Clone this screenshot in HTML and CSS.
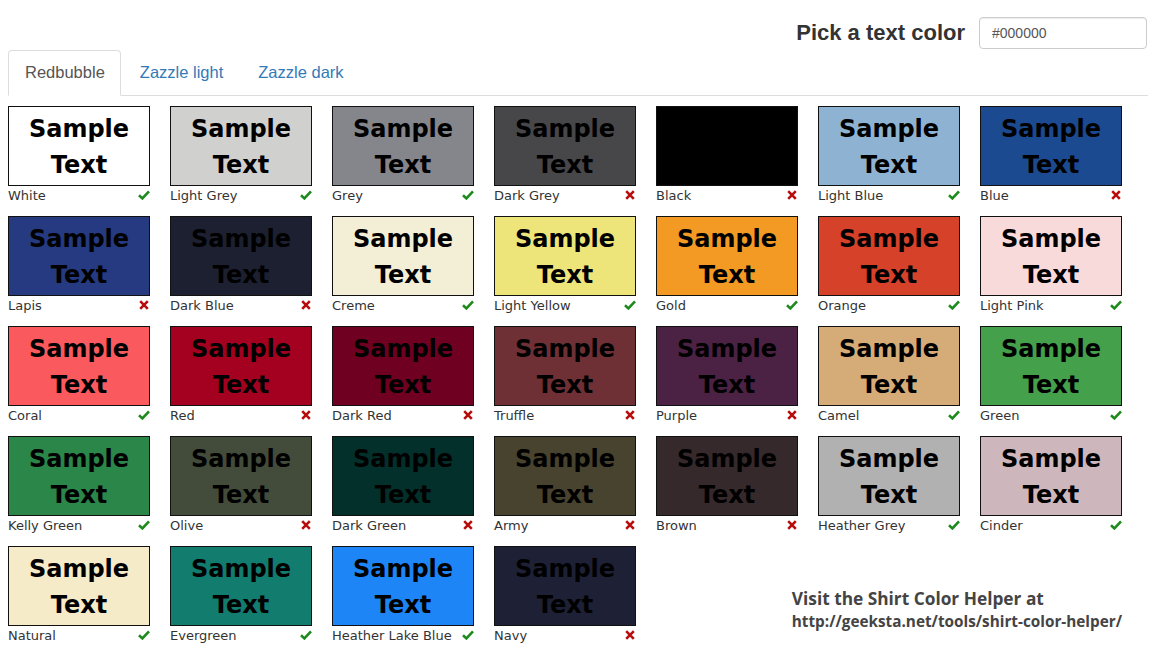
FILE: index.html
```html
<!DOCTYPE html>
<html>
<head>
<meta charset="utf-8">
<link rel="stylesheet" href="styles.css">
</head>
<body>
<svg class="defs" width="0" height="0" aria-hidden="true">
  <symbol id="ok" viewBox="0 0 12 10"><path d="M1 5.2 L4.4 8.4 L11 1.4" fill="none" stroke="currentColor" stroke-width="2.6" stroke-linejoin="miter"/></symbol>
  <symbol id="no" viewBox="0 0 10 10"><path d="M1.2 1.2 L8.8 8.8 M8.8 1.2 L1.2 8.8" fill="none" stroke="currentColor" stroke-width="2.6"/></symbol>
</svg>
<div class="page">
  <header class="top">
    <label class="pick">Pick a text color</label>
    <input class="color-input" type="text" value="#000000">
  </header>
  <nav class="tabs">
    <a class="tab active">Redbubble</a>
    <a class="tab">Zazzle light</a>
    <a class="tab">Zazzle dark</a>
  </nav>
  <main class="grid">
    <div class="item"><div class="box c-white">Sample<br>Text</div><div class="lbl"><span>White</span><svg class="ok"><use href="#ok"/></svg></div></div>
    <div class="item"><div class="box c-lightgrey">Sample<br>Text</div><div class="lbl"><span>Light Grey</span><svg class="ok"><use href="#ok"/></svg></div></div>
    <div class="item"><div class="box c-grey">Sample<br>Text</div><div class="lbl"><span>Grey</span><svg class="ok"><use href="#ok"/></svg></div></div>
    <div class="item"><div class="box c-darkgrey">Sample<br>Text</div><div class="lbl"><span>Dark Grey</span><svg class="no"><use href="#no"/></svg></div></div>
    <div class="item"><div class="box c-black">Sample<br>Text</div><div class="lbl"><span>Black</span><svg class="no"><use href="#no"/></svg></div></div>
    <div class="item"><div class="box c-lightblue">Sample<br>Text</div><div class="lbl"><span>Light Blue</span><svg class="ok"><use href="#ok"/></svg></div></div>
    <div class="item"><div class="box c-blue">Sample<br>Text</div><div class="lbl"><span>Blue</span><svg class="no"><use href="#no"/></svg></div></div>

    <div class="item"><div class="box c-lapis">Sample<br>Text</div><div class="lbl"><span>Lapis</span><svg class="no"><use href="#no"/></svg></div></div>
    <div class="item"><div class="box c-darkblue">Sample<br>Text</div><div class="lbl"><span>Dark Blue</span><svg class="no"><use href="#no"/></svg></div></div>
    <div class="item"><div class="box c-creme">Sample<br>Text</div><div class="lbl"><span>Creme</span><svg class="ok"><use href="#ok"/></svg></div></div>
    <div class="item"><div class="box c-lightyellow">Sample<br>Text</div><div class="lbl"><span>Light Yellow</span><svg class="ok"><use href="#ok"/></svg></div></div>
    <div class="item"><div class="box c-gold">Sample<br>Text</div><div class="lbl"><span>Gold</span><svg class="ok"><use href="#ok"/></svg></div></div>
    <div class="item"><div class="box c-orange">Sample<br>Text</div><div class="lbl"><span>Orange</span><svg class="ok"><use href="#ok"/></svg></div></div>
    <div class="item"><div class="box c-lightpink">Sample<br>Text</div><div class="lbl"><span>Light Pink</span><svg class="ok"><use href="#ok"/></svg></div></div>

    <div class="item"><div class="box c-coral">Sample<br>Text</div><div class="lbl"><span>Coral</span><svg class="ok"><use href="#ok"/></svg></div></div>
    <div class="item"><div class="box c-red">Sample<br>Text</div><div class="lbl"><span>Red</span><svg class="no"><use href="#no"/></svg></div></div>
    <div class="item"><div class="box c-darkred">Sample<br>Text</div><div class="lbl"><span>Dark Red</span><svg class="no"><use href="#no"/></svg></div></div>
    <div class="item"><div class="box c-truffle">Sample<br>Text</div><div class="lbl"><span>Truffle</span><svg class="no"><use href="#no"/></svg></div></div>
    <div class="item"><div class="box c-purple">Sample<br>Text</div><div class="lbl"><span>Purple</span><svg class="no"><use href="#no"/></svg></div></div>
    <div class="item"><div class="box c-camel">Sample<br>Text</div><div class="lbl"><span>Camel</span><svg class="ok"><use href="#ok"/></svg></div></div>
    <div class="item"><div class="box c-green">Sample<br>Text</div><div class="lbl"><span>Green</span><svg class="ok"><use href="#ok"/></svg></div></div>

    <div class="item"><div class="box c-kelly">Sample<br>Text</div><div class="lbl"><span>Kelly Green</span><svg class="ok"><use href="#ok"/></svg></div></div>
    <div class="item"><div class="box c-olive">Sample<br>Text</div><div class="lbl"><span>Olive</span><svg class="no"><use href="#no"/></svg></div></div>
    <div class="item"><div class="box c-darkgreen">Sample<br>Text</div><div class="lbl"><span>Dark Green</span><svg class="no"><use href="#no"/></svg></div></div>
    <div class="item"><div class="box c-army">Sample<br>Text</div><div class="lbl"><span>Army</span><svg class="no"><use href="#no"/></svg></div></div>
    <div class="item"><div class="box c-brown">Sample<br>Text</div><div class="lbl"><span>Brown</span><svg class="no"><use href="#no"/></svg></div></div>
    <div class="item"><div class="box c-heathergrey">Sample<br>Text</div><div class="lbl"><span>Heather Grey</span><svg class="ok"><use href="#ok"/></svg></div></div>
    <div class="item"><div class="box c-cinder">Sample<br>Text</div><div class="lbl"><span>Cinder</span><svg class="ok"><use href="#ok"/></svg></div></div>

    <div class="item"><div class="box c-natural">Sample<br>Text</div><div class="lbl"><span>Natural</span><svg class="ok"><use href="#ok"/></svg></div></div>
    <div class="item"><div class="box c-evergreen">Sample<br>Text</div><div class="lbl"><span>Evergreen</span><svg class="ok"><use href="#ok"/></svg></div></div>
    <div class="item"><div class="box c-lakeblue">Sample<br>Text</div><div class="lbl"><span>Heather Lake Blue</span><svg class="ok"><use href="#ok"/></svg></div></div>
    <div class="item"><div class="box c-navy">Sample<br>Text</div><div class="lbl"><span>Navy</span><svg class="no"><use href="#no"/></svg></div></div>

    <div class="promo">
      <div class="promo-title">Visit the Shirt Color Helper at</div>
      <div class="promo-url">http://geeksta.net/tools/shirt-color-helper/</div>
    </div>
  </main>
</div>
</body>
</html>
```
FILE: styles.css
```css
* { box-sizing: border-box; }
html, body { margin: 0; padding: 0; background: #fff; }
body { font-family: "Liberation Sans", Arial, sans-serif; color: #333; }

.defs { position: absolute; width: 0; height: 0; overflow: hidden; }

.page { width: 1164px; padding: 0 8px; }

.top {
  display: flex;
  justify-content: flex-end;
  align-items: center;
  gap: 14px;
  height: 50px;
  padding: 17px 9px 1px 0;
}
.pick {
  font-size: 22px;
  font-weight: bold;
  color: #333;
}
.color-input {
  width: 168px;
  height: 32px;
  border: 1px solid #ccc;
  border-radius: 4px;
  padding: 0 12px;
  font-family: "Liberation Sans", Arial, sans-serif;
  font-size: 14px;
  color: #555;
  box-shadow: inset 0 1px 1px rgba(0,0,0,0.075);
}

.tabs {
  display: flex;
  height: 46px;
  border-bottom: 1px solid #ddd;
  width: 1140px;
}
.tab {
  display: flex;
  align-items: center;
  padding: 0 15px 1px 16px;
  margin-right: 2px;
  font-size: 16.5px;
  color: #337ab7;
  border: 1px solid transparent;
  border-radius: 4px 4px 0 0;
  margin-bottom: -1px;
}
.tab.active {
  color: #555;
  background: #fff;
  border-color: #ddd #ddd transparent #ddd;
}

.grid {
  display: grid;
  grid-template-columns: repeat(7, 142px);
  column-gap: 20px;
  row-gap: 10px;
  margin-top: 10px;
}
.item { height: 100px; }
.box {
  height: 80px;
  border: 1px solid #111;
  font-family: "DejaVu Sans", sans-serif;
  font-weight: bold;
  font-size: 24px;
  line-height: 36px;
  text-align: center;
  color: #000;
  padding-top: 4px;
}
.lbl {
  display: flex;
  justify-content: space-between;
  align-items: center;
  height: 19px;
  font-family: "DejaVu Sans", sans-serif;
  font-size: 13px;
  color: #333;
}
.ok { width: 12px; height: 10px; color: #1e8a1e; margin-top: -1px; }
.no { width: 10px; height: 10px; color: #b80d0d; margin-right: 1px; margin-top: -1px; }

.promo {
  grid-column: 5 / 8;
  justify-self: end;
  align-self: end;
  padding-bottom: 15px;
  font-family: "Open Sans", "DejaVu Sans", sans-serif;
  font-weight: bold;
  color: #444;
}
.promo-title { font-size: 17.3px; line-height: 24px; }
.promo-url { font-size: 15.3px; line-height: 20px; }

.c-white { background: #ffffff; }
.c-lightgrey { background: #d0d0ce; }
.c-grey { background: #84868b; }
.c-darkgrey { background: #47474a; }
.c-black { background: #000000; }
.c-lightblue { background: #8eb3d2; }
.c-blue { background: #1b4a91; }
.c-lapis { background: #253a80; }
.c-darkblue { background: #1c2030; }
.c-creme { background: #f3eed6; }
.c-lightyellow { background: #ede57a; }
.c-gold { background: #f29a23; }
.c-orange { background: #d6412a; }
.c-lightpink { background: #f9dadb; }
.c-coral { background: #fa5a5e; }
.c-red { background: #a4001f; }
.c-darkred { background: #6f0021; }
.c-truffle { background: #6e3035; }
.c-purple { background: #4b2244; }
.c-camel { background: #d5ac78; }
.c-green { background: #44a04a; }
.c-kelly { background: #2a8649; }
.c-olive { background: #434c3a; }
.c-darkgreen { background: #03302a; }
.c-army { background: #48432e; }
.c-brown { background: #35292b; }
.c-heathergrey { background: #b1b1b1; }
.c-cinder { background: #cdb7bc; }
.c-natural { background: #f5ebc8; }
.c-evergreen { background: #127c6f; }
.c-lakeblue { background: #1d85f5; }
.c-navy { background: #1e2135; }
```
